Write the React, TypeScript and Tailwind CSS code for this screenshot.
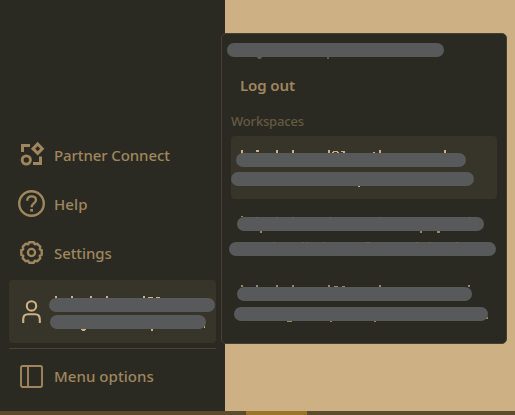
import React from "react";

type Mark = [x: number, y: number, w: number, h: number];

function Marks({ items, color, width, height }: { items: Mark[]; color: string; width: number; height: number }) {
  return (
    <svg className="absolute left-0 top-0" width={width} height={height} fill={color} aria-hidden="true">
      {items.map(([x, y, w, h], i) => (
        <rect key={i} x={x} y={y} width={w} height={h} />
      ))}
    </svg>
  );
}

function Bar({ className }: { className: string }) {
  return <div className={`relative h-3.5 rounded-full bg-[#58595b] ${className}`} />;
}

function PartnerIcon() {
  return (
    <svg width="27" height="27" viewBox="0 0 27 27" fill="none" stroke="currentColor">
      <path d="M4.5 11V4.5H12" strokeWidth="3" />
      <path d="M15 22.5H22.5V15.5" strokeWidth="3" />
      <circle cx="8.3" cy="19" r="4.1" strokeWidth="2.9" />
      <path d="M19.7 3L24.3 7.7L19.7 12.4L15 7.7Z" strokeWidth="3" />
    </svg>
  );
}

function HelpIcon() {
  return (
    <svg width="27" height="27" viewBox="0 0 27 27" fill="none" stroke="currentColor">
      <circle cx="13.5" cy="13.5" r="12.3" strokeWidth="2.4" />
      <path d="M9.2 10.8C9.2 7.7 11 6.4 13.7 6.4C16.3 6.4 18 7.7 18 10C18 13 13.6 13.3 13.6 17.3" strokeWidth="2.3" />
      <path d="M13.6 19V21.6" strokeWidth="2.8" />
    </svg>
  );
}

function GearIcon() {
  return (
    <svg width="27" height="27" viewBox="0 0 27 27" fill="none" stroke="currentColor" strokeLinejoin="round">
      <path
        d="M11.2 3.3H15.8L16.7 5.2L19.4 4.8L22.2 7.6L21.8 10.3L23.7 11.2V15.8L21.8 16.7L22.2 19.4L19.4 22.2L16.7 21.8L15.8 23.7H11.2L10.3 21.8L7.6 22.2L4.8 19.4L5.2 16.7L3.3 15.8V11.2L5.2 10.3L4.8 7.6L7.6 4.8L10.3 5.2Z"
        strokeWidth="2.4"
      />
      <circle cx="13.5" cy="13.5" r="3.6" strokeWidth="2.3" />
    </svg>
  );
}

function UserIcon() {
  return (
    <svg width="27" height="27" viewBox="0 0 27 27" fill="none" stroke="currentColor" strokeWidth="2.1">
      <circle cx="13.5" cy="7.9" r="4.7" />
      <path d="M5.2 25V21.5C5.2 17.8 6.8 16.2 9.8 16.2H17.2C20.2 16.2 21.8 17.8 21.8 21.5V25" />
    </svg>
  );
}

function PanelIcon() {
  return (
    <svg width="27" height="27" viewBox="0 0 27 27" fill="none" stroke="currentColor" strokeWidth="1.9">
      <rect x="3" y="3" width="21" height="21" rx="1.7" />
      <path d="M10 3V24" />
    </svg>
  );
}

function NavItem({ icon, label, className }: { icon: React.ReactNode; label: string; className: string }) {
  return (
    <div className="flex h-[49px] items-center gap-[9px] pl-[9px] text-[#9f865e]">
      {icon}
      <span className={`whitespace-nowrap text-[15px] leading-5 ${className}`}>{label}</span>
    </div>
  );
}

export default function App() {
  return (
    <div className="relative flex h-[415px] w-[515px] flex-col overflow-hidden bg-[#cdb185] font-['Noto_Sans','Open_Sans',sans-serif] font-medium">
      <div className="flex h-[411px]">
        <aside className="flex w-[225px] flex-col bg-[#2b2a22] pl-[9px] pr-[9px] pt-[130px]">
          <NavItem icon={<PartnerIcon />} label="Partner Connect" className="tracking-[-0.1px]" />
          <NavItem icon={<HelpIcon />} label="Help" className="tracking-[0.1px]" />
          <NavItem icon={<GearIcon />} label="Settings" className="tracking-[-0.1px]" />
          <div className="relative mt-[3px] flex h-[63px] items-center rounded-[4px] bg-[#373429] pl-[9px] text-[#cdb185]">
            <UserIcon />
            <Marks
              width={207}
              height={63}
              color="#cdb185"
              items={[[46, 16, 2, 3], [62, 16, 2, 2], [81, 16, 2, 3], [97, 16, 2, 3], [134, 16, 2, 3], [139, 17, 5, 1], [147, 17, 4, 1], [179, 18, 2, 1], [72, 49, 5, 1], [73, 50, 3, 1], [142, 49, 2, 2], [195, 46, 1, 2]]}
            />
            <div className="ml-1 flex flex-col gap-[3px] pt-1">
              <Bar className="w-[166px]" />
              <Bar className="ml-px w-[156px]" />
            </div>
          </div>
          <div className="mt-[5px] h-px bg-[#4b4433]" />
          <div className="mt-[3px]">
            <NavItem icon={<PanelIcon />} label="Menu options" className="pb-0.5 tracking-[0.05px]" />
          </div>
        </aside>
        <main className="flex-1 bg-[#cdb185]" />
      </div>
      <footer className="flex h-1 bg-[#5c4c2b]">
        <div className="ml-[246px] w-[61px] bg-[#987528]" />
      </footer>

      <div className="absolute left-[221px] top-[33px] h-[311px] w-[286px] rounded-[5px] border border-[#464031] bg-[#2b2a22] px-[9px]">
        <div className="relative -ml-[4px] mt-[9px] h-[18px]">
          <Marks width={230} height={18} color="#645a43" items={[[30, 14, 5, 1], [31, 15, 3, 1], [100, 14, 2, 2]]} />
          <Bar className="w-[217px]" />
        </div>
        <div className="ml-[9px] mt-[14px] h-5 whitespace-nowrap text-[15px] font-semibold leading-5 tracking-[-0.1px] text-[#9f865e]">Log out</div>
        <div className="mt-[17px] h-[18px] whitespace-nowrap text-[13px] leading-[18px] tracking-[-0.18px] text-[#645a43]">Workspaces</div>
        <div className="relative mt-[6px] h-[63px] rounded-[4px] bg-[#373429] pt-[17px]">
          <Marks
            width={266}
            height={63}
            color="#cdb185"
            items={[[10, 14, 2, 4], [25, 14, 3, 2], [45, 14, 2, 4], [61, 14, 2, 4], [97, 14, 2, 4], [102, 15, 5, 1], [101, 16, 2, 1], [106, 16, 2, 1], [110, 15, 4, 1], [112, 16, 2, 2], [142, 16, 2, 1], [148, 14, 2, 4], [213, 14, 2, 4], [127, 50, 2, 1]]}
          />
          <Bar className="ml-[5px] w-[230px]" />
          <Bar className="mt-[5px] w-[243px]" />
        </div>
        <div className="relative mt-[3px] h-[63px] pt-[15px]">
          <Marks
            width={266}
            height={63}
            color="#9f865e"
            items={[[10, 14, 2, 1], [29, 29, 2, 2], [189, 29, 2, 2], [206, 29, 3, 2]]}
          />
          <Bar className="ml-[6px] w-[247px]" />
          <Bar className="-ml-[2px] mt-[11px] w-[267px]" />
          <Marks
            width={266}
            height={63}
            color="#6e6554"
            items={[[25, 15, 2, 1], [45, 15, 2, 1], [61, 15, 2, 1], [98, 15, 2, 1], [148, 15, 2, 1], [238, 15, 2, 1], [42, 40, 2, 1], [71, 40, 2, 1], [75, 40, 2, 1], [92, 40, 2, 1], [134, 40, 5, 1], [185, 40, 2, 1], [198, 40, 2, 1], [225, 40, 2, 1]]}
          />
        </div>
        <div className="relative mt-[5px] h-[63px] pt-[17px]">
          <Marks
            width={266}
            height={63}
            color="#9f865e"
            items={[[10, 15, 2, 2], [25, 15, 2, 2], [45, 15, 2, 2], [61, 15, 2, 2], [97, 15, 2, 2], [103, 16, 4, 1], [111, 16, 3, 1], [148, 15, 2, 2], [237, 15, 2, 2], [56, 51, 5, 1], [99, 51, 2, 1], [143, 51, 2, 1], [255, 47, 2, 2]]}
          />
          <Bar className="ml-[6px] w-[235px]" />
          <Bar className="ml-[3px] mt-[6px] w-[254px]" />
        </div>
      </div>
    </div>
  );
}
